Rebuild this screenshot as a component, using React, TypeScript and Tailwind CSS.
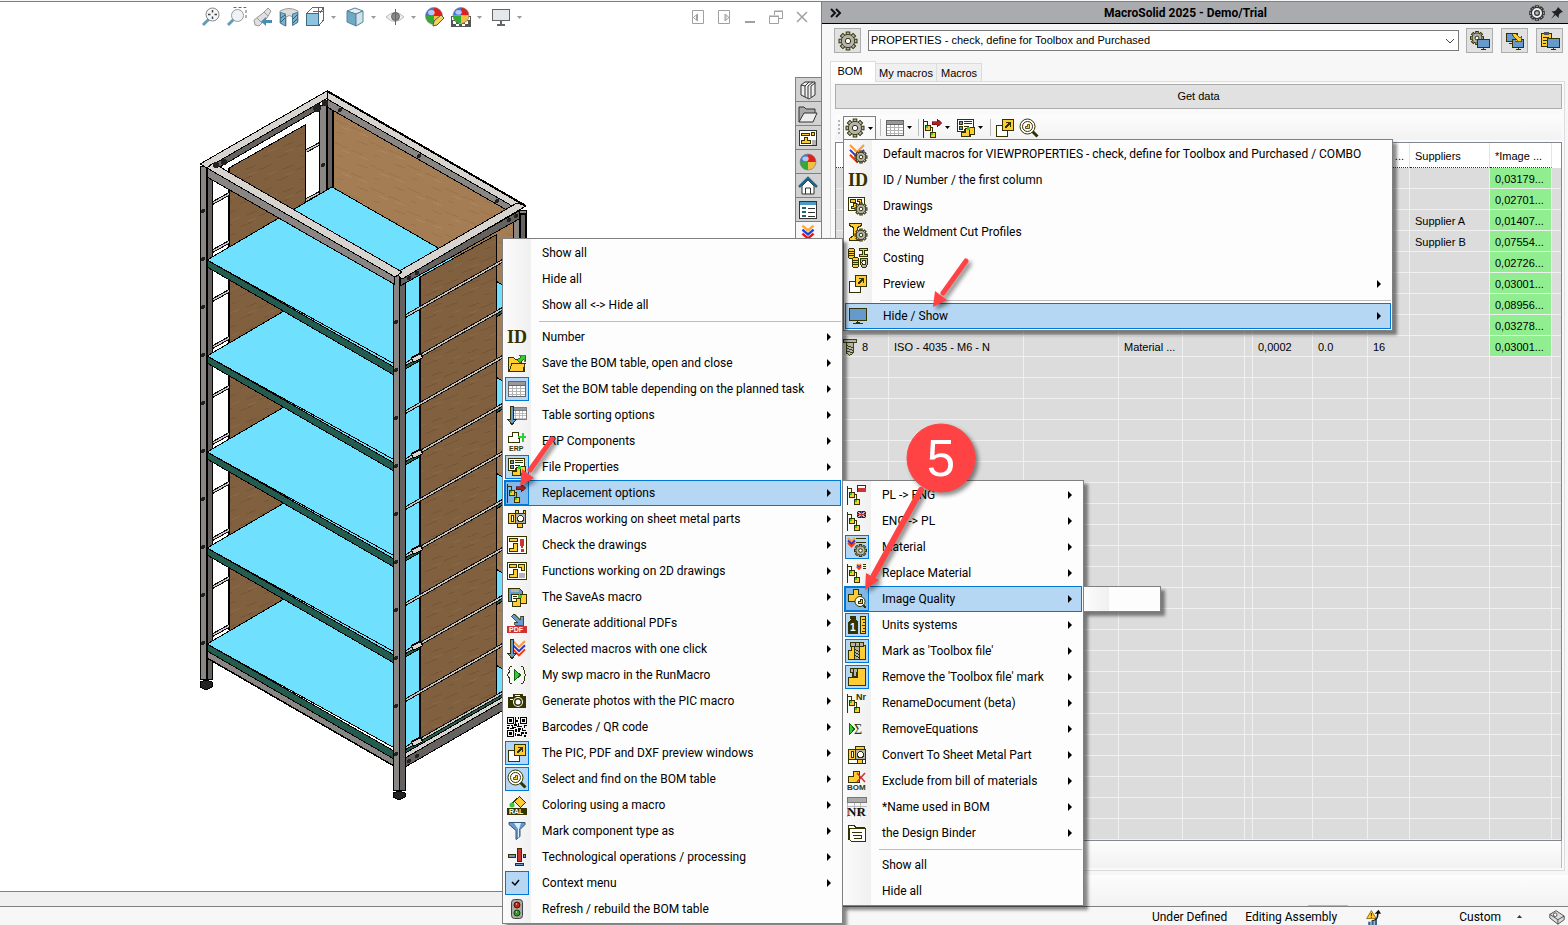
import { ReactNode } from "react";
import { clsx } from "clsx";

const DARK = "#333300";
const GOLD = "#ffcc33";
const BLUE = "#6699cc";
const RED = "#cc3333";
const GRAY = "#b3b3b3";

/* ---------- icon parts ---------- */

function Gear({ cx, cy, r }: { cx: number; cy: number; r: number }) {
  return (
    <g fill={GRAY} stroke={DARK} strokeWidth="1" shapeRendering="auto">
      {[0, 45, 90, 135, 180, 225, 270, 315].map((a) => (
        <rect
          key={a}
          x={cx - r * 0.2}
          y={cy - r}
          width={r * 0.4}
          height={r * 0.5}
          transform={`rotate(${a} ${cx} ${cy})`}
        />
      ))}
      <circle cx={cx} cy={cy} r={r * 0.72} />
      <circle cx={cx} cy={cy} r={r * 0.68} stroke="none" />
      <circle cx={cx} cy={cy} r={r * 0.3} fill="#fff" />
    </g>
  );
}

function Tree({ children }: { children?: ReactNode }) {
  return (
    <>
      <path d="M0.500 1v19M0.500 3.500h4v4M5.500 9.500h4v5" fill="none" stroke={DARK} />
      <rect x="2.500" y="7.500" width="5" height="5" fill={GOLD} stroke={DARK} />
      <rect x="7.500" y="14.500" width="5" height="5" fill={GOLD} stroke={DARK} />
      <path d="M3 8h2v2h-2zM8 15h2v2h-2z" fill="#33cc33" />
      {children}
    </>
  );
}

function Chevrons({ x, y, w }: { x: number; y: number; w: number }) {
  const h = w / 2;
  return (
    <g fill="none" strokeWidth="2" shapeRendering="auto">
      <path d={`M${x} ${y}l${h} ${h}l${h} ${-h}`} stroke="#ff9933" />
      <path d={`M${x} ${y + h * 0.7}l${h} ${h}l${h} ${-h}`} stroke="#3333cc" />
      <path d={`M${x} ${y + h * 1.4}l${h} ${h}l${h} ${-h}`} stroke="#ff3300" />
    </g>
  );
}

function Grid() {
  return (
    <>
      <rect x="1.500" y="2.500" width="17" height="15" fill="#fff" stroke="#666" />
      <rect x="2" y="3" width="16" height="3" fill="#999" />
      <path d="M2 9.500h16M2 12.500h16M2 15.500h16M5.500 6v11M9.500 6v11M13.500 6v11" stroke={GRAY} />
      <path d="M1 6.500h18" stroke="#666" />
    </>
  );
}

function Lens() {
  return (
    <g shapeRendering="auto">
      <path d="M13.500 13.500L18.500 18.500" stroke={DARK} strokeWidth="3" />
      <circle cx="8.500" cy="8.500" r="7.500" fill="#fff" stroke={DARK} />
      <circle cx="8.500" cy="8.500" r="5" fill="none" stroke={DARK} />
      <path d="M8.500 6.500h2v4h-4v-2h2z" fill={GOLD} stroke={DARK} strokeWidth="0.800" />
    </g>
  );
}

function Ball({ cx, cy, r }: { cx: number; cy: number; r: number }) {
  return (
    <g shapeRendering="auto">
      <path d={`M${cx} ${cy}V${cy - r}A${r} ${r} 0 0 0 ${cx - r} ${cy}z`} fill="#4477dd" />
      <path d={`M${cx} ${cy}V${cy - r}A${r} ${r} 0 0 1 ${cx + r} ${cy}z`} fill="#e02020" />
      <path d={`M${cx} ${cy}H${cx - r}A${r} ${r} 0 0 0 ${cx} ${cy + r}z`} fill="#33aa33" />
      <path d={`M${cx} ${cy}V${cy + r}A${r} ${r} 0 0 0 ${cx + r} ${cy}z`} fill="#f0c040" />
      <ellipse cx={cx - r * 0.3} cy={cy - r * 0.4} rx={r * 0.4} ry={r * 0.3} fill="#fff" opacity="0.6" />
      <circle cx={cx} cy={cy} r={r} fill="none" stroke="#777" strokeWidth="0.600" />
    </g>
  );
}

function Part({ d }: { d: string }) {
  return <path d={d} fill={GOLD} stroke={DARK} />;
}

const icons: Record<string, ReactNode> = {
  macroGear: (
    <>
      <Chevrons x={2} y={1} w={14} />
      <Gear cx={13} cy={13} r={6} />
    </>
  ),
  id: (
    <text x="0" y="16" fontFamily="Liberation Serif, serif" fontWeight="700" fontSize="18" fill={DARK}>ID</text>
  ),
  drawingGear: (
    <>
      <rect x="0.500" y="1.500" width="16" height="13" fill="#fff" stroke={DARK} />
      <Part d="M2.500 3.500h5v3h-5z" />
      <Part d="M9.500 3.500h4v5h-2v-3h-2z" />
      <Part d="M5.500 7.500h3v5h-5v-2h2z" />
      <Gear cx={13} cy={13} r={6} />
    </>
  ),
  profileGear: (
    <>
      <Part d="M1.500 1.500h12v2l-4 2v8l4 3v2h-12v-2l4-3v-8l-4-2z" />
      <Gear cx={13} cy={13} r={6} />
    </>
  ),
  costing: (
    <>
      <g fill={GOLD} stroke={DARK}>
        <rect x="0.500" y="0.500" width="6" height="10" rx="2" />
        <path d="M1 3.500h6M1 5.500h6M1 7.500h6" />
        <rect x="4.500" y="9.500" width="6" height="10" rx="2" />
        <path d="M4 12.500h7M4 14.500h7M4 16.500h7" />
        <path d="M11.500 0.500h8v2h-3v4h3v2h-8v-2h3v-4h-3z" />
      </g>
      <path d="M12.500 10.500h7v6l-2 3h-3l-2-3z" fill={GRAY} stroke={DARK} />
      <circle cx="16" cy="14.500" r="2" fill="#fff" stroke={DARK} />
    </>
  ),
  preview: (
    <>
      <rect x="1.500" y="7.500" width="11" height="11" fill="#fff" stroke={DARK} />
      <Part d="M7.500 1.500h11v11h-11z" />
      <path d="M10 10l5-5M11 4.500h4.500v4.500" fill="none" stroke={DARK} strokeWidth="1.500" />
    </>
  ),
  screen: (
    <>
      <rect x="1.500" y="2.500" width="17" height="12" fill={BLUE} stroke={DARK} />
      <path d="M8 16.500h4M5 17.500h10M9.500 15v3" stroke={DARK} />
    </>
  ),
  folder: (
    <>
      <Part d="M1.500 18.500v-14h5l2 2h6v4h3v8z" />
      <path d="M2 18.500l3-8h13l-2 8z" fill={GOLD} stroke={DARK} />
      <path d="M10 7l4-3-2-1.500h6.500v6l-1.500-2-4 3z" fill="#33cc33" stroke={DARK} strokeWidth="0.700" />
    </>
  ),
  grid: <Grid />,
  sort: (
    <>
      <g transform="translate(4 0) scale(0.850)">
        <Grid />
      </g>
      <path d="M3.500 1.500h3v13h3l-4.500 5-4.500-5h3z" fill={BLUE} stroke={DARK} />
    </>
  ),
  erp: (
    <>
      <path d="M1.500 11.500v-6h4v-4h6v6h1v4z" fill="#fff" stroke={DARK} />
      <path d="M11 6h8M15.500 2v9" stroke="#33cc33" strokeWidth="2" />
      <text x="2" y="19.500" fontFamily="Liberation Sans" fontWeight="700" fontSize="7" fill={DARK}>ERP</text>
    </>
  ),
  props: (
    <>
      <rect x="1.500" y="1.500" width="16" height="12" fill="#fff" stroke={DARK} />
      <path d="M3.500 3.500h3v3h-3zM3.500 8.500h3v3h-3z" fill={BLUE} stroke={DARK} />
      <path d="M8 3.500h8M8 5.500h8M8 8.500h5" stroke={DARK} />
      <path d="M8.500 18.500v-7h4v-2h6v7h-4v2z" fill={GOLD} stroke={DARK} />
      <Part d="M5.500 14.500h4v-4h4v8h-8z" />
      <path d="M11 9h3v3h-3z" fill="#33cc33" />
    </>
  ),
  replace: (
    <Tree>
      <path d="M9 3.500h5v-2.500l5 4-5 4v-2.500h-5z" fill="#aa2222" stroke="#660000" strokeWidth="0.600" />
    </Tree>
  ),
  sheet: (
    <>
      <Part d="M1.500 4.500h7v10h-7z" />
      <rect x="4.500" y="6.500" width="2" height="6" fill="#fff" stroke={DARK} />
      <Part d="M8.500 1.500h3v3h-3zM16.500 1.500h2v3h-2zM10.500 14.500h5v4h-5z" />
      <rect x="8.500" y="4.500" width="10" height="10" fill={GRAY} stroke={DARK} />
      <circle cx="13.500" cy="9.500" r="3" fill="#fff" stroke={DARK} />
    </>
  ),
  check2d: (
    <>
      <rect x="0.500" y="1.500" width="19" height="17" fill="#fff" stroke={DARK} />
      <Part d="M2.500 3.500h8v3h-8z" />
      <Part d="M6.500 8.500h4v8h-8v-3h4z" />
      <path d="M13 3.500h4v6l-1 3h-2l-1-3zM14 14h3v3h-3z" fill={RED} />
    </>
  ),
  draw2d: (
    <>
      <rect x="0.500" y="1.500" width="19" height="17" fill="#fff" stroke={DARK} />
      <Part d="M2.500 3.500h7v3h-7z" />
      <Part d="M6.500 8.500h4v8h-8v-3h4z" />
      <Part d="M11.500 3.500h6v6h-3v-3h-3z" />
      <path d="M12 12h6v5h-6z" fill={GRAY} />
    </>
  ),
  saveAs: (
    <>
      <path d="M1.500 1.500h11l3 3v10h-14z" fill={BLUE} stroke={DARK} />
      <path d="M4 2h8v3h-8z" fill={GRAY} />
      <rect x="4.500" y="7.500" width="7" height="7" fill="#fff" stroke={DARK} />
      <path d="M6 9.500h4M6 11.500h4" stroke={DARK} />
      <Part d="M5.500 14.500h4v-3h4v8h-8z" />
      <Part d="M13.500 7.500h6v9h-6z" />
      <path d="M11 8h4v3h-4z" fill="#33cc33" />
    </>
  ),
  pdf: (
    <>
      <path d="M4.500 2.500l3-2 6 6v-3.500h3v9h-9v-3h3z" fill={BLUE} stroke={DARK} strokeWidth="0.800" />
      <rect x="0" y="13" width="20" height="7" fill={RED} />
      <text x="2" y="19" fontFamily="Liberation Sans" fontWeight="700" fontSize="7" fill="#fff">PDF</text>
    </>
  ),
  pick: (
    <>
      <Chevrons x={6} y={2} w={12} />
      <path d="M3.500 0.500h3v14h3l-4.500 5-4.500-5h3z" fill={BLUE} stroke={DARK} />
    </>
  ),
  swp: (
    <>
      <path d="M5 1.500q-3 0-3 3v3l-1.500 2.500 1.500 2.500v3q0 3 3 3M14 1.500q3 0 3 3v3l1.500 2.500-1.500 2.500v3q0 3-3 3" fill="none" stroke={DARK} />
      <path d="M7.500 4.500v11l6-5.500z" fill="#33cc33" stroke="#116611" />
    </>
  ),
  camera: (
    <>
      <path d="M1 6h5v-3h10v2h3v12h-18z" fill={DARK} />
      <circle cx="11" cy="11" r="5" fill="#fff" shapeRendering="auto" />
      <circle cx="11" cy="11" r="4" fill={DARK} shapeRendering="auto" />
      <circle cx="11" cy="11" r="2.500" fill="#fff" shapeRendering="auto" />
      <path d="M8 4.500h5M3 8.500h3" stroke="#fff" />
    </>
  ),
  qr: (
    <>
      <g fill="none" stroke="#000">
        <rect x="0.500" y="0.500" width="6" height="6" />
        <rect x="13.500" y="0.500" width="6" height="6" />
        <rect x="0.500" y="13.500" width="6" height="6" />
      </g>
      <path
        d="M2 2h3v3h-3zM15 2h3v3h-3zM2 15h3v3h-3zM8 0h1v3h2v2h-2v2h-1zM11 0h1v2h-1zM0 8h3v1h-3zM4 8h2v2h3v1h-4v-2h-1zM7 7h3v2h-3zM11 6h1v3h3v1h-5v-1h1zM17 8h3v1h-2v2h-1zM0 10h2v2h-2zM3 11h4v1h-4zM8 12h2v3h-2zM11 11h3v2h-1v2h-2zM15 11h1v2h3v1h-4zM8 16h1v3h-1zM10 17h3v1h2v1h-5zM14 15h3v2h-2v1h-1zM18 15h2v2h-2zM17 18h2v2h-2z"
        fill="#000"
      />
    </>
  ),
  lens: <Lens />,
  ral: (
    <>
      <path d="M12.500 1.500l6 6-5 5-6-6z" fill={GOLD} stroke={DARK} />
      <path d="M4 10l6-7" stroke={DARK} />
      <circle cx="5" cy="10" r="2.500" fill="#33cc33" shapeRendering="auto" />
      <rect x="0" y="13" width="20" height="7" fill={DARK} />
      <text x="2" y="19" fontFamily="Liberation Sans" fontWeight="700" fontSize="7" fill="#fff">RAL</text>
    </>
  ),
  funnel: (
    <g shapeRendering="auto">
      <path d="M2 1.500h16v2l-5 5v7l-4 3v-9l-7-6z" fill={BLUE} stroke="#335577" />
      <path d="M7 2l4 6v9l1-1v-8l2-6z" fill="#ddeeff" />
    </g>
  ),
  tech: (
    <>
      <rect x="1.500" y="7.500" width="7" height="3" fill={BLUE} stroke={DARK} />
      <rect x="10.500" y="1.500" width="4" height="13" fill={RED} stroke={DARK} />
      <rect x="16.500" y="7.500" width="2" height="3" fill={BLUE} stroke={DARK} />
      <rect x="8.500" y="16.500" width="8" height="2" fill={BLUE} stroke={DARK} />
    </>
  ),
  tick: <path d="M5 9l3 3 4-5" fill="none" stroke="#000" strokeWidth="1.500" shapeRendering="auto" />,
  lights: (
    <g shapeRendering="auto">
      <rect x="4.500" y="0.500" width="11" height="19" rx="3" fill="#aaa" stroke="#444" />
      <circle cx="10" cy="6" r="3" fill="#cc2211" stroke="#551100" />
      <circle cx="10" cy="14" r="3" fill="#339922" stroke="#114400" />
      <path d="M9 5h1M9 13h1" stroke="#fff" />
    </g>
  ),
  treePl: (
    <Tree>
      <rect x="10.500" y="0.500" width="8" height="6" fill="#fff" stroke={DARK} />
      <path d="M11 3h8v4h-8z" fill={RED} />
    </Tree>
  ),
  treeEng: (
    <Tree>
      <rect x="10" y="0" width="9" height="7" fill="#222255" />
      <path d="M10 0l9 7M19 0l-9 7" stroke="#bbb" />
      <path d="M14.500 0v7M10 3.500h9" stroke={RED} strokeWidth="1.500" />
    </Tree>
  ),
  material: (
    <>
      <Chevrons x={1} y={1} w={7} />
      <path d="M9 1.500h10M9 5.500h10" stroke={DARK} />
      <Gear cx={13.5} cy={13.5} r={6} />
    </>
  ),
  treeMat: (
    <Tree>
      <Chevrons x={10} y={1} w={4} />
      <path d="M16 1.500h3M16 3.500h3M16 5.500h3" stroke={DARK} />
    </Tree>
  ),
  quality: (
    <>
      <Part d="M1.500 12.500v-7h5v-5h5v5h3v7z" />
      <path d="M15 15l4 4" stroke={DARK} strokeWidth="2" />
      <circle cx="13" cy="12.500" r="5" fill="#fff" stroke={DARK} shapeRendering="auto" />
      <Part d="M13.500 10.500h2v4h-4v-2h2z" />
    </>
  ),
  units: (
    <>
      <path d="M3 1h6v3h-1l3 3v12h-10v-12l3-3h-1z" fill={DARK} />
      <text x="3" y="16" fontFamily="Liberation Sans" fontWeight="700" fontSize="10" fill="#fff">1</text>
      <Part d="M13.500 1.500h5v17h-5z" />
      <path d="M15 4.500h3M16 7.500h2M15 10.500h3M16 13.500h2M15 16.500h3" stroke={DARK} />
    </>
  ),
  toolbox: (
    <>
      <Part d="M1.500 18.500v-9h3v-5h14v14z" />
      <rect x="3.500" y="1.500" width="13" height="4" fill={GRAY} stroke={DARK} />
      <path d="M7.500 5.500h5v13h-5z" fill={GRAY} stroke={DARK} />
      <path d="M8.500 1v4M12.500 1v4M8 8.500l4 2M8 11.500l4 2M8 14.500l4 2" stroke={DARK} />
    </>
  ),
  untoolbox: (
    <>
      <Part d="M1.500 18.500v-8h9v-9h8v17z" />
      <path d="M3.500 1.500h7v4h-1v4h-4v-4h-2zM6.500 1.500v8" fill={GRAY} stroke={DARK} />
    </>
  ),
  treeNr: (
    <Tree>
      <text x="9" y="7" fontFamily="Liberation Sans" fontWeight="700" fontSize="9" fill={DARK}>Nr</text>
    </Tree>
  ),
  sigma: (
    <>
      <path d="M2.500 4.500v11l5-5.500z" fill="#33cc33" stroke="#116611" />
      <text x="7" y="15" fontFamily="Liberation Serif" fontSize="14" fill={DARK}>Σ</text>
    </>
  ),
  sheetBox: (
    <>
      <rect x="1.500" y="14.500" width="17" height="4" fill="#fff" stroke={DARK} />
      <Part d="M10.500 14.500h5v4h-5zM8.500 1.500h9v3h-9zM1.500 4.500h7v10h-7z" />
      <rect x="4.500" y="6.500" width="2" height="6" fill="#fff" stroke={DARK} />
      <rect x="8.500" y="4.500" width="10" height="10" fill={GRAY} stroke={DARK} />
      <circle cx="13.500" cy="9.500" r="3" fill="#fff" stroke={DARK} />
    </>
  ),
  exclude: (
    <>
      <Part d="M1.500 11.500v-6h5v-5h6v11z" />
      <path d="M10 2l8 9M18 2l-8 9" stroke={RED} strokeWidth="1.500" shapeRendering="auto" />
      <text x="0" y="19" fontFamily="Liberation Sans" fontWeight="700" fontSize="8" fill={DARK}>BOM</text>
    </>
  ),
  nr: (
    <>
      <rect x="0.500" y="0.500" width="19" height="5" fill="#aaa" stroke="#777" />
      <path d="M0.500 6v14M7.500 6v14M13.500 6v14M0 9.500h20" stroke="#bbb" />
      <text x="0" y="19" fontFamily="Liberation Serif" fontWeight="700" fontSize="13" fill="#111">NR</text>
    </>
  ),
  binder: (
    <g fill="#fff" stroke={DARK}>
      <path d="M1.500 16.500v-14h6l1 2h9v12z" />
      <path d="M2.500 5.500h16v13h-14l-2-2z" />
      <path d="M5 9.500h10M5.500 12.500h9v3h-8" fill="none" />
    </g>
  ),
  gear: <Gear cx={10} cy={10} r={9} />,
  gearScreen: (
    <>
      <Gear cx={7} cy={7} r={6.5} />
      <path d="M7.500 8.500h12v8h-12z" fill={BLUE} stroke={DARK} />
      <path d="M11 18.500h5M13.500 17v2" stroke={DARK} />
    </>
  ),
  copyScreen: (
    <>
      <path d="M1.500 2.500h11v8h-11z" fill={BLUE} stroke={DARK} />
      <path d="M7.500 8.500h11v8h-11z" fill={BLUE} stroke={DARK} />
      <path d="M11 18.500h5M13.500 17v2M4 12.500h3" stroke={DARK} />
      <path d="M7 2.500h4l4 4 1-2v6h-6l2-2z" fill={GOLD} stroke={DARK} strokeWidth="0.700" />
    </>
  ),
  clipScreen: (
    <>
      <Part d="M1.500 2.500h10v13h-10z" />
      <path d="M4 1h5v3h-5z" fill="#555" />
      <path d="M3 6.500h6M3 9.500h4M3 12.500h3" stroke={DARK} />
      <path d="M7.500 7.500h12v9h-12z" fill={BLUE} stroke={DARK} />
      <path d="M11 18.500h5M13.500 17v2" stroke={DARK} />
    </>
  ),
  bolt: (
    <>
      <rect x="0.500" y="1.500" width="14" height="4" fill={GRAY} stroke={DARK} />
      <path d="M3.500 5.500h8v11l-4 3-4-3zM4 8.500l7 2M4 11.500l7 2M4 14.500l7 2" fill={GRAY} stroke={DARK} />
    </>
  ),
  zoomFit: (
    <g shapeRendering="auto" fill="none">
      <path d="M2 18l6-6" stroke="#5f9db9" strokeWidth="3" />
      <circle cx="11.500" cy="7.500" r="6.500" fill="#f4f6f8" stroke="#888" />
      <path d="M11.500 3v2.500M11.500 9.500v2.500M7 7.500h2.500M13.500 7.500h2.500" stroke="#444" strokeWidth="1.500" />
    </g>
  ),
  zoomArea: (
    <g shapeRendering="auto" fill="none">
      <path d="M6.500 0.500h12.500v12" stroke="#666" strokeDasharray="3 2" />
      <path d="M1 18l6-6" stroke="#5f9db9" strokeWidth="3" />
      <circle cx="10.500" cy="8.500" r="6" fill="#eef3f7" stroke="#999" />
    </g>
  ),
  prevView: (
    <g shapeRendering="auto">
      <path d="M1 13l9-7 5-5 3 3-4 7-8 8-4-1z" fill="#e0e0e0" stroke="#999" />
      <path d="M4 11l5 5M11 5l4 4" stroke="#999" />
      <path d="M8 14.500l5-4.500v3h6v3h-6v3z" fill="#4a8db0" />
    </g>
  ),
  section: (
    <g shapeRendering="auto">
      <path d="M1 4q9-5 18 0v11l-5 3v-8q-4-3-7 0v9l-6-3z" fill="#ddd" stroke="#999" />
      <path d="M1.500 5.500l5 1.500v12l-5-3zM13.500 7l5-1.500v10l-5 3z" fill="#7ab4d0" stroke="#4a7a92" />
      <path d="M2 11l4-3M2 15l4-4M14 12l4-4M14 16l4-4" stroke="#24607e" />
    </g>
  ),
  orient: (
    <>
      <path d="M7.500 0.500h11v13M7.500 0.500l-6 6M18.500 0.500l-4 6M13.500 1v5M8 4.500h10M18 13.500l-4 5" stroke="#666" fill="none" />
      <rect x="1.500" y="6.500" width="12" height="12" fill="#8fc3dd" stroke="#3a6c85" />
    </>
  ),
  cube: (
    <g shapeRendering="auto" stroke="#5a8498">
      <path d="M2 4l8-3 8 3-7 3z" fill="#e6eef2" />
      <path d="M2 4l9 3v12l-9-4z" fill="#6eaac6" />
      <path d="M11 7l7-3v11l-7 4z" fill="#cfe3ec" />
    </g>
  ),
  eye: (
    <g shapeRendering="auto">
      <path d="M1 10q9-9 18 0q-9 9-18 0z" fill="#eee" stroke="#bbb" />
      <circle cx="10.500" cy="9.500" r="4" fill="#888" stroke="#666" />
      <path d="M10.500 2v16" stroke="#666" />
    </g>
  ),
  ballPencil: (
    <>
      <Ball cx={9} cy={9} r={8.5} />
      <path d="M8 19l1-5 7-6 3 3-7 7z" fill="#f3d35a" stroke="#555" shapeRendering="auto" />
    </>
  ),
  ballFloor: (
    <>
      <path d="M0 9h20v11h-20z" fill="#555" />
      <path d="M2 14h3v3h-3zM8 14h3v3h-3zM14 14h3v3h-3zM5 17h3v2h-3zM11 17h3v2h-3zM16 10h3v3h-3zM1 10h3v3h-3z" fill="#fff" />
      <Ball cx={10} cy={8.5} r={8} />
    </>
  ),
  display: (
    <>
      <rect x="1.500" y="2.500" width="17" height="11" fill="#e4e8ea" stroke="#666" />
      <path d="M10 14v3M6 17.500h8" stroke="#666" strokeWidth="2" />
    </>
  ),
  library: (
    <g fill="#fff" stroke="#333" shapeRendering="auto">
      <path d="M3 5l4-3 10 0v13l-6 4-8-4z" fill="#eee" />
      <path d="M3 5l4 1v11M7 6l4-4M10 6v12M10 6l5-4M13 6v11M13 6l4-3" fill="none" />
    </g>
  ),
  openFolder: (
    <g stroke="#333" shapeRendering="auto">
      <path d="M1 18V3h5l2 2h9v4" fill="#aaa" />
      <path d="M1 18L6 9h13l-4 9z" fill="#eee" />
    </g>
  ),
  palette: (
    <>
      <rect x="1.500" y="2.500" width="17" height="15" fill="#fff" stroke="#333" />
      <Part d="M3.500 5.500h8v2h-8zM13.500 4.500h3v3h-3zM6.500 9.500h3v3h3v3h-9v-3h3z" />
      <path d="M14 12h4v5h-4z" fill={GRAY} />
    </>
  ),
  ball: <Ball cx={10} cy={10} r={8} />,
  home: (
    <g shapeRendering="auto">
      <path d="M4 10l6-6 6 6v8h-12z" fill="#fff" stroke="#333" />
      <path d="M1 11l9-9 9 9" fill="none" stroke="#1f6688" strokeWidth="2.500" />
      <path d="M7.500 18v-6h5v6" fill="none" stroke="#333" />
    </g>
  ),
  customProps: (
    <>
      <rect x="1.500" y="1.500" width="17" height="17" fill="#fff" stroke="#333" />
      <path d="M2 2h16v3h-16z" fill="#4a9cc4" />
      <path d="M4 7h4v2h-4zM4 11h4v2h-4zM4 15h4v2h-4z" fill="#24607e" />
      <path d="M10 8.500h7M10 12.500h7M10 16.500h7" stroke="#333" />
    </>
  ),
  macroSolid: (
    <g fill="none" strokeWidth="3" shapeRendering="auto">
      <path d="M3 2l7 6 7-6" stroke="#ffaa33" />
      <path d="M3 7l7 6 7-6" stroke="#2244dd" />
      <path d="M3 12l7 6 7-6" stroke="#ee1111" />
    </g>
  ),
  rebuild: (
    <g shapeRendering="auto">
      <path d="M4 16h3v4h-3zM8 14h3v6h-3zM12 12h3v8h-3z" fill="#336688" />
      <path d="M8 2l6 10h-12z" fill="#ffcc22" stroke="#885500" />
      <path d="M8 5v4M8 10v1" stroke="#000" />
      <path d="M9 14q6 0 6-8h-3l5-5 3 5h-3q0 9-8 9z" fill="#111" />
    </g>
  ),
  tag: (
    <g shapeRendering="auto" stroke="#444">
      <path d="M2 7l7-4 9 6v4l-7 5-9-7z" fill="#ddd" />
      <path d="M2 7l9 6 7-4M11 13v5" fill="none" />
      <circle cx="8" cy="7.500" r="2" fill="#fff" />
    </g>
  ),
};

function Icon({ name, className = "size-5" }: { name: string; className?: string }) {
  return (
    <svg
      viewBox="0 0 20 20"
      className={clsx("shrink-0 overflow-visible", className)}
      shapeRendering="crispEdges"
      aria-hidden="true"
    >
      {icons[name]}
    </svg>
  );
}

function Caret({ className = "text-black" }: { className?: string }) {
  return (
    <svg viewBox="0 0 5 3" className={clsx("h-[3px] w-[5px] shrink-0", className)} aria-hidden="true">
      <path d="M0 0h5l-2.500 3z" fill="currentColor" />
    </svg>
  );
}

/* ---------- menus ---------- */

type Item = {
  label: string;
  icon?: string;
  boxed?: boolean;
  more?: boolean;
  active?: boolean;
  sub?: ReactNode;
} | null;

function Menu({ items, className }: { items: Item[]; className: string }) {
  return (
    <ul
      className={clsx(
        "absolute z-10 border border-[#808080] bg-[#fdfdfd] bg-linear-to-r from-[#fbfbfb] from-0% to-[#f0f0f0] bg-[length:28px_100%] bg-no-repeat p-px shadow-[4px_4px_3px_rgba(0,0,0,0.45)]",
        className,
      )}
    >
      {items.map((item, i) =>
        item === null ? (
          <li key={i} className="flex h-[6px] items-center pl-[35px]">
            <hr className="w-full border-[#bdbdbd]" />
          </li>
        ) : (
          <li key={i} className="relative">
            <button
              type="button"
              className={clsx(
                "flex h-[26px] w-full items-center pr-[9px] text-left whitespace-nowrap",
                item.active && "bg-[#b5d7f3] outline outline-[#0078d7] -outline-offset-1",
              )}
            >
              <span
                className={clsx(
                  "ml-px flex size-6 shrink-0 items-center justify-center",
                  item.boxed && "border border-[#0078d7]",
                  item.boxed && (item.active ? "bg-[#80b8ea]" : "bg-[#b5d7f3]"),
                )}
              >
                {item.icon && <Icon name={item.icon} />}
              </span>
              <span className="ml-[13px] flex-1">{item.label}</span>
              {item.more && (
                <svg viewBox="0 0 5 8" className="h-2 w-[5px]" aria-hidden="true">
                  <path d="M0 0l4 4-4 4z" fill="#000" />
                </svg>
              )}
            </button>
            {item.sub}
          </li>
        ),
      )}
    </ul>
  );
}

const replacementItems: Item[] = [
  { label: "PL -> ENG", icon: "treePl", more: true },
  { label: "ENG -> PL", icon: "treeEng", more: true },
  { label: "Material", icon: "material", boxed: true, more: true },
  { label: "Replace Material", icon: "treeMat", more: true },
  {
    label: "Image Quality",
    icon: "quality",
    boxed: true,
    more: true,
    active: true,
    sub: (
      <div className="absolute top-0 left-full ml-px h-[26px] w-[78px] border border-[#808080] bg-[#fdfdfd] pl-px shadow-[4px_4px_3px_rgba(0,0,0,0.45)]">
        <div className="h-full w-6 bg-linear-to-r from-[#fbfbfb] to-[#f0f0f0]" />
      </div>
    ),
  },
  { label: "Units systems", icon: "units", boxed: true, more: true },
  { label: "Mark as 'Toolbox file'", icon: "toolbox", boxed: true, more: true },
  { label: "Remove the 'Toolbox file' mark", icon: "untoolbox", boxed: true, more: true },
  { label: "RenameDocument (beta)", icon: "treeNr", more: true },
  { label: "RemoveEquations", icon: "sigma", more: true },
  { label: "Convert To Sheet Metal Part", icon: "sheetBox", more: true },
  { label: "Exclude from bill of materials", icon: "exclude", more: true },
  { label: "*Name used in BOM", icon: "nr", more: true },
  { label: "the Design Binder", icon: "binder", more: true },
  null,
  { label: "Show all" },
  { label: "Hide all" },
];

const hideShowItems: Item[] = [
  { label: "Show all" },
  { label: "Hide all" },
  { label: "Show all <-> Hide all" },
  null,
  { label: "Number", icon: "id", more: true },
  { label: "Save the BOM table, open and close", icon: "folder", more: true },
  { label: "Set the BOM table depending on the planned task", icon: "grid", boxed: true, more: true },
  { label: "Table sorting options", icon: "sort", more: true },
  { label: "ERP Components", icon: "erp", more: true },
  { label: "File Properties", icon: "props", boxed: true, more: true },
  {
    label: "Replacement options",
    icon: "replace",
    boxed: true,
    more: true,
    active: true,
    sub: <Menu items={replacementItems} className="top-0 left-full ml-px w-[242px]" />,
  },
  { label: "Macros working on sheet metal parts", icon: "sheet", more: true },
  { label: "Check the drawings", icon: "check2d", more: true },
  { label: "Functions working on 2D drawings", icon: "draw2d", more: true },
  { label: "The SaveAs macro", icon: "saveAs", more: true },
  { label: "Generate additional PDFs", icon: "pdf", more: true },
  { label: "Selected macros with one click", icon: "pick", more: true },
  { label: "My swp macro in the RunMacro", icon: "swp", more: true },
  { label: "Generate photos with the PIC macro", icon: "camera", more: true },
  { label: "Barcodes / QR code", icon: "qr", more: true },
  { label: "The PIC, PDF and DXF preview windows", icon: "preview", boxed: true, more: true },
  { label: "Select and find on the BOM table", icon: "lens", boxed: true, more: true },
  { label: "Coloring using a macro", icon: "ral", more: true },
  { label: "Mark component type as", icon: "funnel", more: true },
  { label: "Technological operations / processing", icon: "tech", more: true },
  { label: "Context menu", icon: "tick", boxed: true, more: true },
  { label: "Refresh / rebuild the BOM table", icon: "lights" },
];

const settingsItems: Item[] = [
  { label: "Default macros for VIEWPROPERTIES - check, define for Toolbox and Purchased / COMBO", icon: "macroGear" },
  { label: "ID / Number / the first column", icon: "id" },
  { label: "Drawings", icon: "drawingGear" },
  { label: "the Weldment Cut Profiles", icon: "profileGear" },
  { label: "Costing", icon: "costing" },
  { label: "Preview", icon: "preview", more: true },
  null,
  {
    label: "Hide / Show",
    icon: "screen",
    more: true,
    active: true,
    sub: <Menu items={hideShowItems} className="-top-[65px] right-full mr-[2px] w-[341px]" />,
  },
];

/* ---------- model view ---------- */

const SHELVES = [644, 548, 452, 356, 260];

function Rod({ x1, y1, x2, y2 }: { x1: number; y1: number; x2: number; y2: number }) {
  return (
    <>
      <path d={`M${x1} ${y1}L${x2} ${y2}`} stroke="#111" strokeWidth="3.500" />
      <path d={`M${x1} ${y1}L${x2} ${y2}`} stroke="#c8c4c0" strokeWidth="1.500" />
    </>
  );
}

function Rack() {
  return (
    <svg
      viewBox="190 85 340 720"
      className="h-[720px] w-[340px]"
      shapeRendering="crispEdges"
      role="img"
      aria-label="Shelving rack assembly"
    >
      <defs>
        <pattern id="oakDark" width="37" height="23" patternUnits="userSpaceOnUse">
          <rect width="37" height="23" fill="#80603f" />
          <path d="M0 9l14-6M18 20l12-5M24 8l11-4M4 19l6-2" stroke="#765637" />
          <path d="M9 14l9-4M26 14l9-3" stroke="#876848" />
        </pattern>
        <pattern id="oakLight" width="37" height="23" patternUnits="userSpaceOnUse">
          <rect width="37" height="23" fill="#a57d55" />
          <path d="M0 4l14 6M18 12l12 5M24 3l11 4M4 17l6 2" stroke="#9c744c" />
          <path d="M9 12l9 4M26 18l9 4" stroke="#ad865e" />
        </pattern>
      </defs>

      {/* back wall and far side panel */}
      <path d="M333 110L520 218V690L333 590z" fill="url(#oakLight)" />
      <path d="M333 110V190" stroke="#000" />
      <Rod x1={306} y1={151} x2={323} y2={142} />
      <Rod x1={306} y1={200} x2={325} y2={190} />
      <path d="M229 168L305 125V640L229 640z" fill="url(#oakDark)" stroke="#000" />
      <path d="M229 168V630" stroke="#000" strokeWidth="2" />
      <path d="M319 105h14v90h-14z" fill="#8a8683" stroke="#000" />
      <path d="M327 105h6v84h-6z" fill="#66625f" stroke="#000" strokeWidth="2" />
      <path d="M513 210h13v40h-13z" fill="#8a8683" stroke="#000" />
      <path d="M520 214h6v36h-6z" fill="#66625f" stroke="#000" strokeWidth="2" />
      <circle cx="323" cy="165" r="2" fill="#222" />

      {/* short rods on the left side */}
      {[204, 252, 301, 348, 397, 444, 493, 540, 588, 636].map((y) => (
        <Rod key={y} x1={211} y1={y} x2={229} y2={y - 10} />
      ))}
      <path d="M207 172h5v507h-5z" fill="#66625f" stroke="#000" />

      {/* bottom frame */}
      <path d="M400 759L502 702V711L400 770z" fill="#66625f" stroke="#000" />
      <path d="M400 752L502 695V702L400 761z" fill="#d8d4cf" stroke="#000" />

      {SHELVES.map((y) => (
        <g key={y}>
          {y === 644 && (
            <path d="M207 650L394 757V766L207 658z" fill="#8a8683" stroke="#000" strokeWidth="1.500" />
          )}
          <path d={`M207 ${y}L332 ${y - 73}L522 ${y + 36}L400 ${y + 107}z`} fill="#70e0ff" stroke="#000" />
          <path d={`M207 ${y}L394 ${y + 107}V${y + 115}L207 ${y + 7}z`} fill="#245c50" stroke="#000" />
          <path d={`M400 ${y + 107}L510 ${y + 44}V${y + 49}L400 ${y + 112}z`} fill="#245c50" stroke="#000" />
        </g>
      ))}

      {/* near side panel */}
      <path d="M420 277L496 235V697L420 741z" fill="url(#oakDark)" stroke="#000" />
      <path d="M420 277V741" stroke="#000" strokeWidth="2" />
      {[317, 365, 413, 461, 509, 557, 605, 653, 701, 749].map((y, i) => (
        <g key={y}>
          <Rod x1={404} y1={y} x2={504} y2={y - 57} />
          {i % 2 === 1 && (
            <>
              <path d={`M412 ${y - 5}L422 ${y - 10}`} stroke="#000" strokeWidth="6" />
              <path d={`M413 ${y - 5}L421 ${y - 9}`} stroke="#d8d4cf" strokeWidth="4" />
            </>
          )}
        </g>
      ))}

      {/* posts */}
      <path d="M200 166h6v513h-6z" fill="#8a8683" stroke="#000" />
      <path d="M200 682l6-2 6 2v5l-6 3-6-3z" fill="#222" stroke="#000" />
      <path d="M393 275h6v515h-6z" fill="#8a8683" stroke="#000" />
      <path d="M399 279h6v511h-6z" fill="#66625f" stroke="#000" />
      <path d="M393 793l6-2 6 2v4l-6 3-6-3z" fill="#222" stroke="#000" />
      {[211, 259, 307, 355, 403, 451, 499, 547, 595, 643].map((y) => (
        <circle key={y} cx="203" cy={y} r="2" fill="#222" />
      ))}
      {[322, 370, 418, 466, 514, 562, 610, 658, 706, 754].map((y) => (
        <circle key={y} cx="396" cy={y} r="2" fill="#222" />
      ))}

      {/* top frame */}
      <g stroke="#000">
        <path d="M213 163L319 102V109L213 171z" fill="#66625f" />
        <path d="M200 164L327 91L333 95L207 168z" fill="#d8d4cf" />
        <path d="M327 97L519 207V217L327 107z" fill="#8a8683" />
        <path d="M327 91L526 206L519 210L327 99z" fill="#d8d4cf" />
        <path d="M327 91L526 206" strokeWidth="2" />
        <path d="M400 279L519 211V219L400 286z" fill="#66625f" />
        <path d="M396 273L517 203L526 206L402 279z" fill="#d8d4cf" />
        <path d="M207 168L394 276V284L207 177z" fill="#8a8683" />
        <path d="M207 168L213 163L402 272L395 277z" fill="#d8d4cf" />
      </g>
      <g fill="#222">
        <circle cx="317" cy="108" r="4" />
        <circle cx="325" cy="103" r="3" />
        <circle cx="340" cy="110" r="2" />
        <circle cx="419" cy="156" r="2" />
        <circle cx="497" cy="201" r="2" />
        <circle cx="224" cy="162" r="3" />
        <circle cx="216" cy="165" r="3" />
        <circle cx="409" cy="278" r="2" />
        <circle cx="417" cy="273" r="2" />
        <circle cx="509" cy="220" r="2" />
        <circle cx="516" cy="216" r="2" />
        <circle cx="409" cy="761" r="2" />
        <circle cx="417" cy="756" r="2" />
      </g>
    </svg>
  );
}

const viewTools: { icon: string; label: string; more?: boolean }[] = [
  { icon: "zoomFit", label: "Zoom to fit" },
  { icon: "zoomArea", label: "Zoom to area" },
  { icon: "prevView", label: "Previous view" },
  { icon: "section", label: "Section view" },
  { icon: "orient", label: "View orientation", more: true },
  { icon: "cube", label: "Display style", more: true },
  { icon: "eye", label: "Hide or show items", more: true },
  { icon: "ballPencil", label: "Edit appearance" },
  { icon: "ballFloor", label: "Apply scene", more: true },
  { icon: "display", label: "View settings", more: true },
];

const windowControls: { label: string; shape: ReactNode }[] = [
  { label: "Previous pane", shape: <path d="M1.500.5h11v13h-11zM6.500 4v7L2.500 7.500zM5.500 5v5" /> },
  { label: "Next pane", shape: <path d="M1.500.5h11v13h-11zM8 4v7l4-3.500zM9 5v5" /> },
  { label: "Minimize", shape: <path d="M2 12h10" strokeWidth="2" /> },
  { label: "Restore", shape: <path d="M5.500 5V1.500h8v7H10M.5 6.500h9v7h-9zM5 1h9M0 6h10" /> },
  { label: "Close", shape: <path d="M2 2l10 10M12 2L2 12" strokeWidth="1.500" /> },
];

const sideTabs = ["library", "openFolder", "palette", "ball", "home", "customProps"];

function Viewport() {
  return (
    <section className="flex min-w-0 flex-1 flex-col bg-[#f0f0f0]">
      <div className="flex min-h-0 flex-1 flex-col overflow-hidden border-b border-[#808080] bg-white">
        <div className="flex h-[75px] shrink-0 items-start pt-[5px] pr-[12px] pl-[201px]">
          <div className="flex flex-1 items-center gap-[6px]">
            {viewTools.map((tool) => (
              <button key={tool.icon} type="button" aria-label={tool.label} className="flex items-center gap-[6px]">
                <Icon name={tool.icon} />
                {tool.more && <Caret className="mr-[3px] text-[#999]" />}
              </button>
            ))}
          </div>
          <div className="flex items-center gap-3 pt-[3px]">
            {windowControls.map((control) => (
              <button key={control.label} type="button" aria-label={control.label}>
                <svg viewBox="0 0 14 14" className="size-[14px]" fill="none" stroke="#a0a0a0" aria-hidden="true">
                  {control.shape}
                </svg>
              </button>
            ))}
          </div>
        </div>
        <div className="flex min-h-0 flex-1">
          <div className="flex-1 overflow-hidden pt-2 pl-[190px]">
            <Rack />
          </div>
          <div className="flex w-[26px] flex-col">
            {sideTabs.map((name) => (
              <button
                key={name}
                type="button"
                aria-label={name}
                className="flex h-6 w-full items-center border-t border-l border-[#808080] bg-[#d2d2d2] pl-[2px]"
              >
                <Icon name={name} />
              </button>
            ))}
            <button
              type="button"
              aria-label="MacroSolid"
              className="flex h-7 w-full items-start border-t border-l border-[#808080] bg-[#f7f7f7] pt-[2px] pl-1"
            >
              <Icon name="macroSolid" className="size-4" />
            </button>
          </div>
        </div>
      </div>
      <div className="h-[14px] shrink-0" />
    </section>
  );
}

/* ---------- task pane ---------- */

const COLUMNS = [53, 135, 95, 64, 62, 8, 60, 55, 42, 80, 62];

const quality = ["0,03179...", "0,02701...", "0,01407...", "0,07554...", "0,02726...", "0,03001...", "0,08956...", "0,03278...", "0,03001..."];
const suppliers: Record<number, string> = { 2: "Supplier A", 3: "Supplier B" };
const lastPart: Record<number, string> = { 1: "ISO - 4035 - M6 - N", 3: "Material ...", 6: "0,0002", 7: "0.0", 8: "16" };

function BomTable() {
  return (
    <div className="min-h-0 flex-1 overflow-hidden border border-[#828790] bg-[#dcdcdc]">
      <table className="w-full table-fixed border-separate border-spacing-0 font-['Liberation_Sans',sans-serif] text-[11px] leading-[13px]">
        <colgroup>
          {COLUMNS.map((w, i) => (
            <col key={i} style={{ width: w }} />
          ))}
          <col />
        </colgroup>
        <thead>
          <tr className="h-[25px] bg-white text-left">
            {COLUMNS.map((_, c) => (
              <th
                key={c}
                scope="col"
                className={clsx(
                  "overflow-hidden border-r border-b border-r-[#e5e5e5] border-b-[#333] px-[5px] pt-[2px] pb-0 font-normal whitespace-nowrap [border-bottom-style:dotted]",
                  c === 8 && "text-right",
                )}
              >
                {c === 8 ? "..." : c === 9 ? "Suppliers" : c === 10 ? "*Image ..." : ""}
              </th>
            ))}
            <th />
          </tr>
        </thead>
        <tbody>
          {Array.from({ length: 32 }, (_, r) => (
            <tr key={r} className="h-[21px]">
              {COLUMNS.map((_, c) => (
                <td
                  key={c}
                  className={clsx(
                    "border-r border-b border-[#f0f0f0] p-0 pt-[2px] whitespace-nowrap",
                    c > 0 && c !== 5 && "pl-[5px]",
                    c === 10 && r < quality.length && "bg-[#90ee90]",
                  )}
                >
                  {c === 0 && r === 8 && (
                    <span className="flex items-center gap-px pl-[7px]">
                      <Icon name="bolt" className="size-[18px]" />8
                    </span>
                  )}
                  {r === 8 && lastPart[c]}
                  {c === 9 && suppliers[r]}
                  {c === 10 && quality[r]}
                </td>
              ))}
              <td className="border-b border-[#f0f0f0] p-0" />
            </tr>
          ))}
        </tbody>
      </table>
    </div>
  );
}

function ToolDivider() {
  return <span className="h-[17px] w-px shrink-0 bg-[#bdbdbd]" />;
}

function ToolStrip() {
  return (
    <div className="mt-[6px] mb-[2px] flex h-[25px] shrink-0 items-center bg-linear-to-b from-[#fdfdfd] to-[#f2f2f2] pl-[3px]">
      <span className="mr-[3px] h-4 w-[2px] bg-[repeating-linear-gradient(#b5b5b5_0_2px,transparent_2px_4px)]" />
      <div className="relative h-full pt-px">
        <button
          type="button"
          aria-label="Settings"
          className="flex h-[23px] w-[33px] items-center gap-[3px] border border-b-0 border-[#808080] bg-[#fafafa] pl-px"
        >
          <Icon name="gear" />
          <Caret />
        </button>
        <Menu items={settingsItems} className="top-6 left-0 w-[550px]" />
      </div>
      <div className="flex flex-1 items-center gap-1 pl-1">
        <ToolDivider />
        <button type="button" aria-label="Table" className="mr-[2px] flex items-center gap-[2px]">
          <Icon name="grid" />
          <Caret />
        </button>
        <ToolDivider />
        <button type="button" aria-label="Replacement options" className="mr-[2px] flex items-center gap-[2px]">
          <Icon name="replace" />
          <Caret />
        </button>
        <button type="button" aria-label="File properties" className="mr-[3px] flex items-center gap-[2px]">
          <Icon name="props" />
          <Caret />
        </button>
        <ToolDivider />
        <button type="button" aria-label="Preview">
          <Icon name="preview" />
        </button>
        <button type="button" aria-label="Find on the BOM table">
          <Icon name="lens" />
        </button>
      </div>
    </div>
  );
}

function Badge() {
  return (
    <svg
      viewBox="500 240 500 360"
      className="pointer-events-none absolute top-[238px] -left-[322px] z-20 h-[360px] w-[500px] drop-shadow-[3px_3px_2px_rgba(0,0,0,0.45)]"
      aria-hidden="true"
    >
      <g fill="#ff4344" stroke="#ff4344" strokeLinecap="round">
        <path d="M966 261L943 293" strokeWidth="5" />
        <path d="M933 307L935 291L947 300z" stroke="none" />
        <path d="M552 439L530 470" strokeWidth="5" />
        <path d="M520 486L522 469L534 478z" stroke="none" />
        <path d="M921 490L874 575" strokeWidth="6" />
        <path d="M865 590L866 573L879 580z" stroke="none" />
        <circle cx="941" cy="458" r="34" />
      </g>
      <text x="941" y="476" textAnchor="middle" fontFamily="Liberation Sans, sans-serif" fontSize="51" fill="#fff">5</text>
    </svg>
  );
}

const squareButton = "flex h-[25px] w-[27px] shrink-0 items-center justify-center border border-[#adadad] bg-[#e1e1e1]";

function TaskPane() {
  return (
    <aside className="relative flex w-[747px] shrink-0 flex-col border-l border-[#808080] bg-[#f7f7f7]">
      <header className="flex h-[22px] shrink-0 items-center border-b border-black bg-[#a9abaf] px-2">
        <svg viewBox="0 0 12 10" className="h-[10px] w-3" fill="none" stroke="#111" strokeWidth="2" aria-hidden="true">
          <path d="M1 1l4 4-4 4M6 1l4 4-4 4" />
        </svg>
        <h1 className="flex-1 text-center font-bold">MacroSolid 2025 - Demo/Trial</h1>
        <svg viewBox="0 0 20 20" className="size-4" aria-hidden="true">
          <g fill="#eee" stroke="#333" strokeWidth="1.500">
            {[0, 45, 90, 135, 180, 225, 270, 315].map((a) => (
              <rect key={a} x="8" y="1" width="4" height="5" transform={`rotate(${a} 10 10)`} />
            ))}
            <circle cx="10" cy="10" r="7" />
            <circle cx="10" cy="10" r="3" fill="#bbb" />
          </g>
        </svg>
        <svg viewBox="0 0 14 14" className="-mr-1 ml-[5px] size-[14px]" aria-hidden="true">
          <path d="M8 1l5 5-2 .5-2 2-.5 3.500-3-3L1 13l3.500-5-3-2.500 3.500-.5 2-2z" fill="#222" />
        </svg>
      </header>

      <div className="flex items-start gap-[7px] pt-1 pr-[5px] pl-3">
        <button type="button" aria-label="Macro settings" className={squareButton}>
          <Icon name="gear" />
        </button>
        <div className="relative mt-[2px] flex-1">
          <select
            aria-label="View"
            className="h-[21px] w-full appearance-none border border-[#7a7a7a] bg-white pl-[2px] font-['Liberation_Sans',sans-serif] text-[11px]"
          >
            <option>PROPERTIES - check, define for Toolbox and Purchased</option>
          </select>
          <svg viewBox="0 0 10 6" className="pointer-events-none absolute top-2 right-1 h-[6px] w-[10px]" fill="none" stroke="#444" aria-hidden="true">
            <path d="M1 1l4 4 4-4" />
          </svg>
        </div>
        <div className="flex gap-2">
          {["gearScreen", "copyScreen", "clipScreen"].map((name) => (
            <button key={name} type="button" aria-label={name} className={squareButton}>
              <Icon name={name} />
            </button>
          ))}
        </div>
      </div>

      <div className="relative z-1 mt-2 -mb-px ml-2 flex h-[21px] items-end font-['Liberation_Sans',sans-serif] text-[11px]" role="tablist">
        <button type="button" role="tab" aria-selected="true" className="h-[21px] w-[46px] border border-b-0 border-[#dcdcdc] bg-white pr-[6px] pb-px">
          BOM
        </button>
        <button type="button" role="tab" aria-selected="false" className="h-[19px] w-[61px] border border-l-0 border-[#dcdcdc] bg-[#f0f0f0] pt-px">
          My macros
        </button>
        <button type="button" role="tab" aria-selected="false" className="h-[19px] w-[45px] border border-l-0 border-[#dcdcdc] bg-[#f0f0f0] pt-px">
          Macros
        </button>
      </div>

      <div className="mr-[3px] ml-2 flex min-h-0 flex-1 flex-col border border-[#dcdcdc] bg-[#fafafa] pt-[2px] pr-[2px] pl-1">
        <button type="button" className="h-[25px] shrink-0 border border-[#adadad] bg-[#e1e1e1] font-['Liberation_Sans',sans-serif] text-[11px]">
          Get data
        </button>
        <ToolStrip />
        <BomTable />
        <div className="mb-[2px] h-[27px] shrink-0 border-r border-[#bbb] bg-linear-to-b from-[#fdfdfd] to-[#f2f2f2]" />
      </div>
      <div className="mt-1 flex h-[31px] shrink-0 items-end justify-end bg-linear-to-b from-[#fdfdfd] to-[#f2f2f2] pr-[220px]">
        <span className="h-px w-10 bg-[#bbb]" />
      </div>
      <Badge />
    </aside>
  );
}

export default function App() {
  return (
    <div className="flex h-screen min-h-[925px] flex-col overflow-hidden bg-[#f7f7f7] font-['Roboto',sans-serif] text-[12px] text-black">
      <div className="h-[2px] shrink-0 border-b border-[#808080]" />
      <main className="flex min-h-0 flex-1">
        <Viewport />
        <TaskPane />
      </main>
      <footer className="flex h-[19px] shrink-0 items-center justify-end border-t border-[#808080] bg-[#f7f7f7] pt-px pr-[2px]">
        <span>Under Defined</span>
        <span className="ml-[18px]">Editing Assembly</span>
        <Icon name="rebuild" className="ml-7 size-4" />
        <span className="ml-[78px]">Custom</span>
        <svg viewBox="0 0 5 3" className="ml-4 h-[3px] w-[5px]" aria-hidden="true">
          <path d="M0 3h5l-2.500-3z" fill="#333" />
        </svg>
        <Icon name="tag" className="ml-[26px] size-[18px]" />
      </footer>
    </div>
  );
}
